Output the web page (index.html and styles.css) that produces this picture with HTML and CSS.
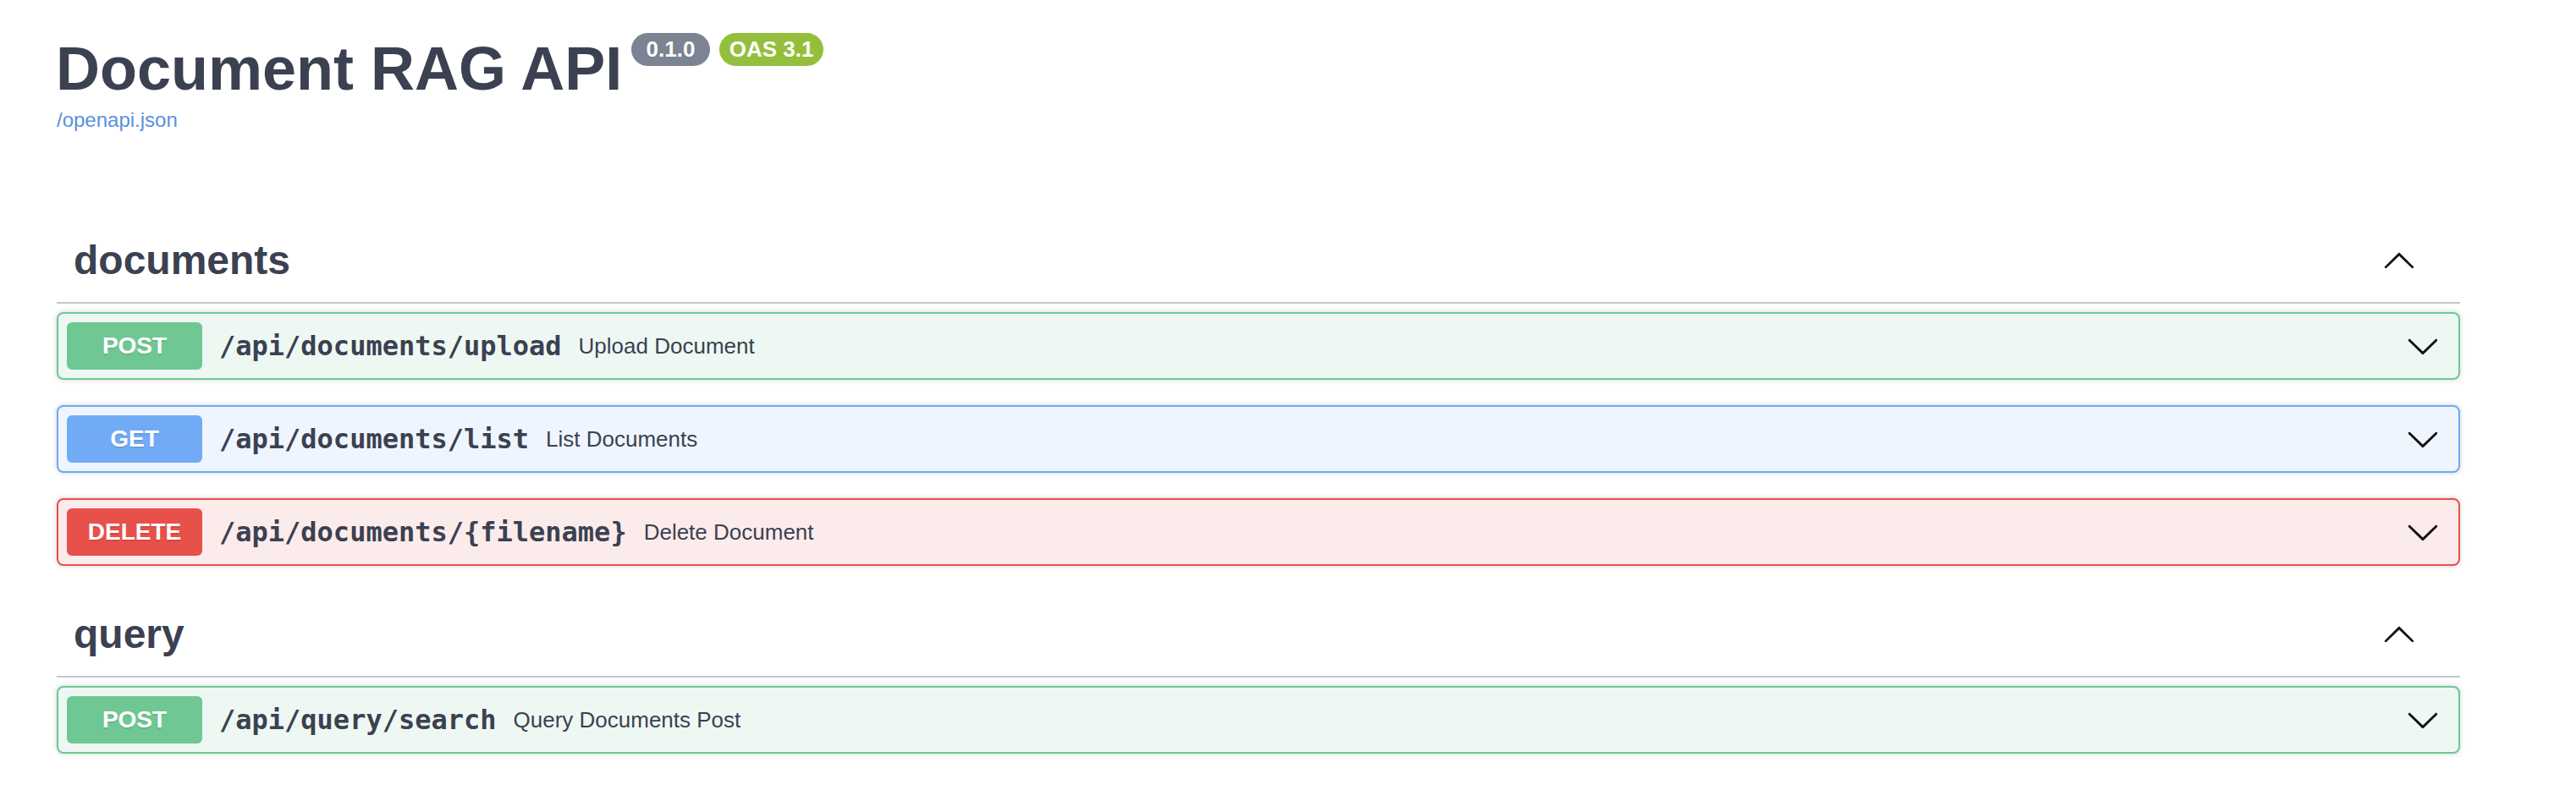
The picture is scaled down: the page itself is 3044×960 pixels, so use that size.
FILE: index.html
```html
<!DOCTYPE html>
<html lang="en">
<head>
<meta charset="utf-8">
<title>Document RAG API</title>
<link rel="stylesheet" href="styles.css">
</head>
<body>
<div class="wrapper">
  <div class="info">
    <h2 class="title">
      <span class="title-text">Document RAG API</span>
      <small class="badge badge-version"><pre> 0.1.0 </pre></small>
      <small class="badge badge-oas"><pre>OAS 3.1</pre></small>
    </h2>
    <a class="spec-link" href="#">/openapi.json</a>
  </div>

  <section class="tag-section">
    <h3 class="tag">
      <span class="tag-name">documents</span>
      <button class="expand" aria-label="collapse">
        <svg viewBox="0 0 20 20" width="40" height="40"><path d="M17.418 14.908c.272.268.709.268.979 0s.271-.701 0-.969l-7.908-7.83c-.27-.268-.707-.268-.979 0l-7.908 7.830c-.27.268-.27.701 0 .969.271.268.709.268.979 0L10 7.765l7.418 7.143z"/></svg>
      </button>
    </h3>
    <div class="opblock opblock-post">
      <div class="summary">
        <span class="method">POST</span>
        <span class="path">/api/documents/upload</span>
        <span class="desc">Upload Document</span>
        <button class="arrow" aria-label="expand">
          <svg viewBox="0 0 20 20" width="40" height="40"><path d="M17.418 6.109c.272-.268.709-.268.979 0s.271.701 0 .969l-7.908 7.83c-.27.268-.707.268-.979 0l-7.908-7.83c-.27-.268-.27-.701 0-.969.271-.268.709-.268.979 0L10 13.25l7.418-7.141z"/></svg>
        </button>
      </div>
    </div>
    <div class="opblock opblock-get">
      <div class="summary">
        <span class="method">GET</span>
        <span class="path">/api/documents/list</span>
        <span class="desc">List Documents</span>
        <button class="arrow" aria-label="expand">
          <svg viewBox="0 0 20 20" width="40" height="40"><path d="M17.418 6.109c.272-.268.709-.268.979 0s.271.701 0 .969l-7.908 7.83c-.27.268-.707.268-.979 0l-7.908-7.83c-.27-.268-.27-.701 0-.969.271-.268.709-.268.979 0L10 13.25l7.418-7.141z"/></svg>
        </button>
      </div>
    </div>
    <div class="opblock opblock-delete">
      <div class="summary">
        <span class="method">DELETE</span>
        <span class="path">/api/documents/{filename}</span>
        <span class="desc">Delete Document</span>
        <button class="arrow" aria-label="expand">
          <svg viewBox="0 0 20 20" width="40" height="40"><path d="M17.418 6.109c.272-.268.709-.268.979 0s.271.701 0 .969l-7.908 7.83c-.27.268-.707.268-.979 0l-7.908-7.83c-.27-.268-.27-.701 0-.969.271-.268.709-.268.979 0L10 13.25l7.418-7.141z"/></svg>
        </button>
      </div>
    </div>
  </section>

  <section class="tag-section">
    <h3 class="tag">
      <span class="tag-name">query</span>
      <button class="expand" aria-label="collapse">
        <svg viewBox="0 0 20 20" width="40" height="40"><path d="M17.418 14.908c.272.268.709.268.979 0s.271-.701 0-.969l-7.908-7.83c-.27-.268-.707-.268-.979 0l-7.908 7.830c-.27.268-.27.701 0 .969.271.268.709.268.979 0L10 7.765l7.418 7.143z"/></svg>
      </button>
    </h3>
    <div class="opblock opblock-post">
      <div class="summary">
        <span class="method">POST</span>
        <span class="path">/api/query/search</span>
        <span class="desc">Query Documents Post</span>
        <button class="arrow" aria-label="expand">
          <svg viewBox="0 0 20 20" width="40" height="40"><path d="M17.418 6.109c.272-.268.709-.268.979 0s.271.701 0 .969l-7.908 7.83c-.27.268-.707.268-.979 0l-7.908-7.83c-.27-.268-.27-.701 0-.969.271-.268.709-.268.979 0L10 13.25l7.418-7.141z"/></svg>
        </button>
      </div>
    </div>
  </section>
</div>
</body>
</html>
```

FILE: styles.css
```css
html, body {
  margin: 0;
  padding: 0;
  background: #ffffff;
}

body {
  font-family: "Liberation Sans", Arial, sans-serif;
  color: #3b4151;
}

.wrapper {
  width: 2840px;
  padding-left: 67px;
  box-sizing: content-box;
}

.info {
  margin-top: 40px;
}

.title {
  display: flex;
  align-items: flex-start;
  margin: 0;
  font-size: 72px;
  font-weight: 700;
  line-height: 83px;
  color: #3b4151;
}

.title-text {
  margin-left: -1px;
}

.badge {
  display: inline-block;
  margin: -1px 0 0 11px;
  padding: 4px 10px;
  border-radius: 114px;
}

.badge pre {
  margin: 0;
  font-family: "Liberation Sans", Arial, sans-serif;
  font-size: 26px;
  font-weight: 700;
  line-height: 31px;
  color: #ffffff;
  white-space: pre;
}

.badge-version {
  background: #7c8392;
}

.badge-oas {
  padding: 4px 12px;
  background: #93bf3c;
}

.spec-link {
  display: block;
  margin-top: 5px;
  font-size: 24px;
  line-height: 28px;
  color: #5990e0;
  text-decoration: none;
  width: max-content;
}

.tag-section {
  display: flex;
  flex-direction: column;
}

.tag-section:first-of-type {
  margin-top: 101px;
}

.tag {
  display: flex;
  align-items: center;
  height: 60px;
  margin: 0 0 10px;
  padding: 20px 40px 20px 20px;
  border-bottom: 2px solid rgba(59, 65, 81, 0.3);
  font-size: 48px;
  font-weight: 700;
  color: #3b4151;
}

.tag-name {
  flex: 1 1 auto;
}

.expand,
.arrow {
  display: flex;
  align-items: center;
  padding: 0 12px;
  border: none;
  background: none;
  cursor: pointer;
}

.expand svg,
.arrow svg {
  display: block;
  width: 40px;
  height: 40px;
  fill: #111111;
}

.opblock {
  margin: 0 0 30px;
  border: 2px solid #000;
  border-radius: 8px;
  box-shadow: 0 0 6px rgba(0, 0, 0, 0.19);
}

.summary {
  display: flex;
  align-items: center;
  padding: 10px;
}

.method {
  min-width: 160px;
  padding: 12px 0;
  border-radius: 6px;
  font-size: 28px;
  font-weight: 700;
  line-height: 32px;
  text-align: center;
  color: #ffffff;
  text-shadow: 0 2px 0 rgba(0, 0, 0, 0.1);
}

.path {
  padding: 0 20px;
  font-family: "DejaVu Sans Mono", "Liberation Mono", monospace;
  font-size: 32px;
  font-weight: 700;
  color: #3b4151;
}

.desc {
  flex: 1 1 auto;
  font-size: 26px;
  color: #3b4151;
}

.opblock-post {
  background: #eef8f3;
  border-color: #6fc994;
}

.opblock-post .method {
  background: #6fc894;
}

.opblock-get {
  background: #eff5fe;
  border-color: #6fa9f5;
}

.opblock-get .method {
  background: #71abf6;
}

.opblock-delete {
  background: #fcebeb;
  border-color: #e8514b;
}

.opblock-delete .method {
  background: #e8504a;
}
```
